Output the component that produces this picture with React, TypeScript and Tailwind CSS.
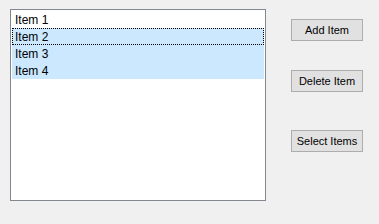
import React from "react";

export default function App() {
  const items = ["Item 1", "Item 2", "Item 3", "Item 4"];
  const selected = [1, 2, 3];
  return (
    <div className="w-[379px] h-[224px] bg-[#f0f0f0] relative" style={{ fontFamily: '"Liberation Sans", Arial, sans-serif' }}>
      <div className="flex">
        <div className="ml-[10px] mt-[9px] w-[256px] h-[192px] border border-[#828790] bg-white p-[1px]">
          {items.map((it, i) => (
            <div
              key={it}
              className={
                "h-[17px] pl-[3px] text-[12px] leading-[19px] text-black overflow-hidden " +
                (selected.includes(i) ? "bg-[#cce8ff] " : "") +
                (i === 1 ? "outline-1 outline-dotted outline-black -outline-offset-1" : "")
              }
            >
              {it}
            </div>
          ))}
        </div>
        <div className="ml-[25px] mt-[19px] flex flex-col">
          <button className="w-[72px] h-[22px] bg-[#e1e1e1] border border-[#adadad] text-[11px] text-black">Add Item</button>
          <button className="mt-[29px] w-[72px] h-[22px] bg-[#e1e1e1] border border-[#adadad] text-[11px] text-black">Delete Item</button>
          <button className="mt-[38px] w-[72px] h-[22px] bg-[#e1e1e1] border border-[#adadad] text-[11px] text-black">Select Items</button>
        </div>
      </div>
    </div>
  );
}
